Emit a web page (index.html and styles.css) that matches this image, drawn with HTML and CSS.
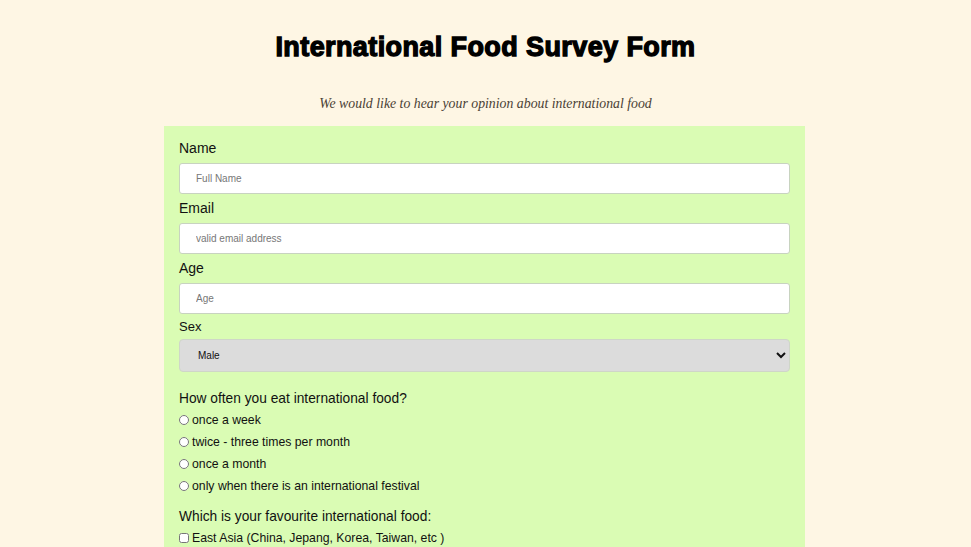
FILE: index.html
```html
<!DOCTYPE html>
<html lang="en">
<head>
<meta charset="utf-8">
<title>International Food Survey Form</title>
<link rel="stylesheet" href="styles.css">
</head>
<body>
<header class="header">
  <h1 class="title">International Food Survey Form</h1>
  <p class="description">We would like to hear your opinion about international food</p>
</header>
<form class="survey">
  <label class="label" for="name">Name</label>
  <input class="field" id="name" type="text" placeholder="Full Name">
  <label class="label" for="email">Email</label>
  <input class="field" id="email" type="email" placeholder="valid email address">
  <label class="label" for="age">Age</label>
  <input class="field" id="age" type="number" placeholder="Age">
  <label class="label label-small" for="sex">Sex</label>
  <select class="dropdown" id="sex">
    <option>Male</option>
    <option>Female</option>
  </select>
  <p class="question">How often you eat international food?</p>
  <label class="option"><input class="radio" type="radio" name="often">once a week</label>
  <label class="option"><input class="radio" type="radio" name="often">twice - three times per month</label>
  <label class="option"><input class="radio" type="radio" name="often">once a month</label>
  <label class="option"><input class="radio" type="radio" name="often">only when there is an international festival</label>
  <p class="question">Which is your favourite international food:</p>
  <label class="option"><input class="check" type="checkbox">East Asia (China, Jepang, Korea, Taiwan, etc )</label>
  <label class="option"><input class="check" type="checkbox">South East Asia (Indonesia, Thailand, Vietnam, etc )</label>
  <label class="option"><input class="check" type="checkbox">Europe</label>
</form>
</body>
</html>
```
FILE: styles.css
```css
html, body {
  margin: 0;
  padding: 0;
}
body {
  background: #fef6e4;
  font-family: "Liberation Sans", Arial, sans-serif;
  color: #111;
}
.header {
  text-align: center;
  padding-top: 30px;
}
.title {
  margin: 0;
  font-family: "Liberation Sans", Arial, sans-serif;
  font-weight: 900;
  font-size: 27px;
  line-height: 34px;
  color: #000;
  -webkit-text-stroke: 1.3px #000;
  letter-spacing: 0.4px;
}
.description {
  margin: 0;
  padding-top: 30px;
  font-family: "Liberation Serif", "Times New Roman", serif;
  font-style: italic;
  font-size: 13.8px;
  line-height: 20px;
  color: #4a3f35;
}
.survey {
  width: 611px;
  margin: 12px 0 0 calc(50% - 321.5px);
  padding: 13px 15px 20px;
  background: #dafcb4;
  display: flex;
  flex-direction: column;
}
.label {
  display: block;
  font-size: 14px;
  line-height: 19px;
  margin: 0 0 5px;
  color: #111;
}
.label-small {
  font-size: 13px;
  line-height: 16px;
  margin-bottom: 4px;
}
.field {
  box-sizing: border-box;
  height: 31px;
  width: 100%;
  margin: 0 0 5px;
  padding: 0 16px;
  border: 1px solid #c8d3c0;
  border-radius: 3px;
  background: #fff;
  font-family: "Liberation Sans", Arial, sans-serif;
  font-size: 10px;
  color: #222;
}
.field::placeholder {
  color: #777;
}
.dropdown {
  box-sizing: border-box;
  height: 33px;
  width: 100%;
  margin: 0 0 18px;
  padding: 0 14px;
  border: 1px solid #cfd6c8;
  border-radius: 4px;
  background: #dcdcdc;
  font-family: "Liberation Sans", Arial, sans-serif;
  font-size: 10px;
  color: #111;
}
.question {
  margin: 0 0 1px;
  font-size: 13.75px;
  line-height: 18px;
}
.option + .question {
  margin-top: 11px;
}
.option {
  display: flex;
  align-items: center;
  font-size: 12.25px;
  line-height: 22px;
  height: 22px;
}
.radio, .check {
  margin: 0 3px 0 0;
  width: 10px;
  height: 10px;
}
```
